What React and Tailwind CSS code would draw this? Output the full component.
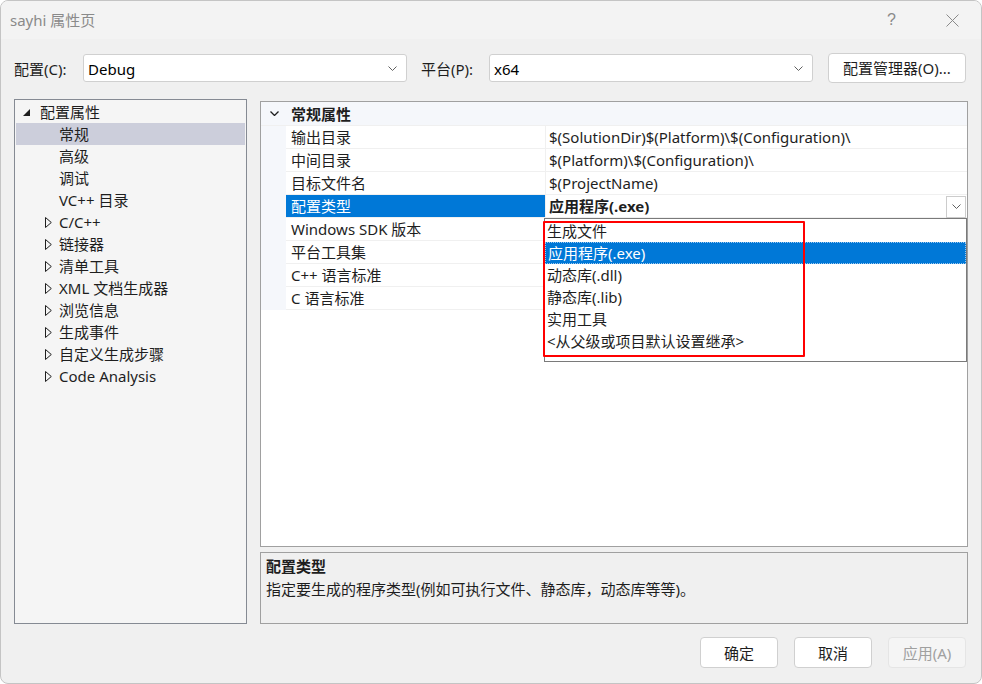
import React from 'react';

const font = { fontFamily: '"Noto Sans", "Noto Sans CJK SC", sans-serif' };

const treeItems = [
    { label: '配置属性', kind: 'root' },
    { label: '常规', kind: 'leaf', selected: true },
    { label: '高级', kind: 'leaf' },
    { label: '调试', kind: 'leaf' },
    { label: 'VC++ 目录', kind: 'leaf' },
    { label: 'C/C++', kind: 'folder' },
    { label: '链接器', kind: 'folder' },
    { label: '清单工具', kind: 'folder' },
    { label: 'XML 文档生成器', kind: 'folder' },
    { label: '浏览信息', kind: 'folder' },
    { label: '生成事件', kind: 'folder' },
    { label: '自定义生成步骤', kind: 'folder' },
    { label: 'Code Analysis', kind: 'folder' },
];

const props = [
    { name: '输出目录', value: '$(SolutionDir)$(Platform)\\$(Configuration)\\' },
    { name: '中间目录', value: '$(Platform)\\$(Configuration)\\' },
    { name: '目标文件名', value: '$(ProjectName)' },
    { name: '配置类型', value: '应用程序(.exe)', selected: true },
    { name: 'Windows SDK 版本', value: '' },
    { name: '平台工具集', value: '' },
    { name: 'C++ 语言标准', value: '' },
    { name: 'C 语言标准', value: '' },
];

const options = ['生成文件', '应用程序(.exe)', '动态库(.dll)', '静态库(.lib)', '实用工具', '<从父级或项目默认设置继承>'];

const Chevron = ({ className = '' }) => (
    <svg width="9" height="5" viewBox="0 0 9 5" className={className}>
        <polyline points="0.5,0.5 4.5,4.5 8.5,0.5" fill="none" stroke="#606060" strokeWidth="1" />
    </svg>
);

const Select = ({ value }) => (
    <div className="w-[324px] h-[28px] bg-white border border-[#d0d0d0] rounded-[3px] flex items-center justify-between pl-[4px] pr-[9px]">
        <span className="text-[15px] text-black leading-[20px] mt-[2px]">{value}</span>
        <Chevron />
    </div>
);

const TreeRow = ({ item }) => {
    let icon = null;
    if (item.kind === 'root') {
        icon = (
            <div className="w-[25px] flex justify-end pr-[10px]">
                <svg width="7" height="7" viewBox="0 0 7 7"><polygon points="7,0 7,7 0,7" fill="#1e1e1e" /></svg>
            </div>
        );
    } else if (item.kind === 'folder') {
        icon = (
            <div className="w-[44px] flex pl-[30px]">
                <svg width="7" height="11" viewBox="0 0 7 11"><polygon points="0.5,0.5 6.3,5.5 0.5,10.5" fill="none" stroke="#1e1e1e" strokeWidth="1" /></svg>
            </div>
        );
    } else {
        icon = <div className="w-[44px]" />;
    }
    return (
        <div className={`flex items-center h-[22px] mx-[1px] ${item.selected ? 'bg-[#cccedb]' : ''}`}>
            <div className="-ml-[1px] flex">{icon}</div>
            <span className="text-[15px] leading-[20px] text-[#1e1e1e] whitespace-nowrap">{item.label}</span>
        </div>
    );
};

const PropRow = ({ p }) => (
    <div className="flex h-[23px]">
        <div className="w-[25px] bg-[#f5f7fb]" />
        <div className={`w-[259px] pl-[5px] flex items-center border-b border-[#f0f0f0] ${p.selected ? 'bg-[#0078d7] text-white border-[#0078d7]' : 'text-[#1e1e1e]'}`}>
            <span className="text-[15px] leading-[20px] whitespace-nowrap">{p.name}</span>
        </div>
        <div className="w-px bg-[#f0f0f0]" />
        <div className="flex-1 pl-[3px] flex items-center justify-between border-b border-[#f0f0f0]">
            <span className={`text-[15px] leading-[20px] whitespace-nowrap text-[#1e1e1e] ${p.selected ? 'font-bold' : ''}`}>{p.value}</span>
            {p.selected && (
                <div className="w-[20px] h-[22px] border border-[#cccccc] bg-white flex items-center justify-center mr-[1px] -mb-[1px]">
                    <Chevron />
                </div>
            )}
        </div>
    </div>
);

const Button = ({ children, disabled }) => (
    <button
        className={`w-[78px] h-[31px] rounded-[4px] border text-[15px] leading-[20px] ${disabled
            ? 'bg-[#f5f5f5] border-[#e5e5e5] text-[#a0a0a0]'
            : 'bg-white border-[#d0d0d0] text-[#1e1e1e]'
            }`}
    >
        {children}
    </button>
);

export default function App() {
    return (
        <div style={font} className="w-[982px] h-[684px] bg-[#f0f0f0] rounded-[8px] border border-[#c4c4c4] overflow-hidden flex flex-col">
            {/* Title bar */}
            <div className="h-[38px] bg-[#f3f3f3] flex items-center justify-between pl-[9px] shrink-0">
                <span className="text-[15px] leading-[20px] text-[#8a8a8a]">sayhi 属性页</span>
                <div className="flex items-center">
                    <span className="text-[16px] leading-[20px] text-[#8a8a8a] mr-[50px]" style={{ fontFamily: '"Liberation Sans", sans-serif' }}>?</span>
                    <svg width="13" height="13" viewBox="0 0 13 13" className="mr-[22px]">
                        <line x1="0.5" y1="0.5" x2="12.5" y2="12.5" stroke="#8a8a8a" strokeWidth="1" />
                        <line x1="12.5" y1="0.5" x2="0.5" y2="12.5" stroke="#8a8a8a" strokeWidth="1" />
                    </svg>
                </div>
            </div>

            {/* Config row */}
            <div className="flex items-center h-[30px] mt-[14px] pl-[13px] shrink-0">
                <span className="text-[15px] leading-[20px] text-[#1e1e1e] w-[69px] mt-[2px]">配置(C):</span>
                <Select value="Debug" />
                <span className="text-[15px] leading-[20px] text-[#1e1e1e] ml-[14px] w-[68px] mt-[2px]">平台(P):</span>
                <Select value="x64" />
                <button className="ml-[15px] w-[138px] h-[30px] bg-white border border-[#d0d0d0] rounded-[4px] text-[15px] leading-[20px] text-[#1e1e1e]">
                    配置管理器(O)...
                </button>
            </div>

            {/* Main area */}
            <div className="flex mt-[16px] pl-[13px] shrink-0">
                {/* Tree */}
                <div className="w-[233px] h-[525px] border border-[#858a93] bg-[#f5f5f5] pt-[1px]">
                    {treeItems.map((item) => (
                        <TreeRow key={item.label} item={item} />
                    ))}
                </div>

                <div className="ml-[13px] mt-[2px] flex flex-col">
                    {/* Property grid */}
                    <div className="relative w-[708px] h-[446px] border border-[#a0a0a0] bg-white">
                        <div className="flex items-center h-[24px] bg-[#f5f7fb] border-b border-[#f0f0f0]">
                            <div className="w-[25px] flex justify-center pl-[1px]">
                                <svg width="9" height="5" viewBox="0 0 9 5">
                                    <polyline points="0.5,0.5 4.5,4.5 8.5,0.5" fill="none" stroke="#1e1e1e" strokeWidth="1.3" />
                                </svg>
                            </div>
                            <span className="pl-[5px] text-[15px] leading-[20px] font-bold text-[#1e1e1e]">常规属性</span>
                        </div>
                        {props.map((p) => (
                            <PropRow key={p.name} p={p} />
                        ))}

                        {/* Dropdown list */}
                        <div className="absolute left-[283px] top-[116px] w-[423px] h-[144px] bg-white border border-[#7a7a7a] pt-px">
                            {options.map((o, i) => (
                                <div
                                    key={o}
                                    className={`h-[22px] pl-[2px] flex items-center ${i === 1 ? 'bg-[#0078d7] text-white border border-dotted border-[#9ec9ef]' : 'text-[#1e1e1e]'}`}
                                >
                                    <span className="text-[15px] leading-[20px] whitespace-nowrap">{o}</span>
                                </div>
                            ))}
                        </div>

                        {/* Red highlight */}
                        <div className="absolute left-[282px] top-[119px] w-[262px] h-[136px] border-2 border-[#ff0000] rounded-[1px]" />
                    </div>

                    {/* Description */}
                    <div className="mt-[5px] w-[708px] h-[72px] border border-[#a0a0a0] bg-[#f0f0f0] px-[5px] pt-[2px]">
                        <div className="text-[15px] leading-[22px] font-bold text-[#1e1e1e]">配置类型</div>
                        <div className="text-[15px] leading-[22px] text-[#1e1e1e] mt-px">指定要生成的程序类型(例如可执行文件、静态库，动态库等等)。</div>
                    </div>
                </div>
            </div>

            {/* Buttons */}
            <div className="flex justify-end gap-[16px] mt-[13px] pr-[15px]">
                <Button>确定</Button>
                <Button>取消</Button>
                <Button disabled>应用(A)</Button>
            </div>
        </div>
    );
}
